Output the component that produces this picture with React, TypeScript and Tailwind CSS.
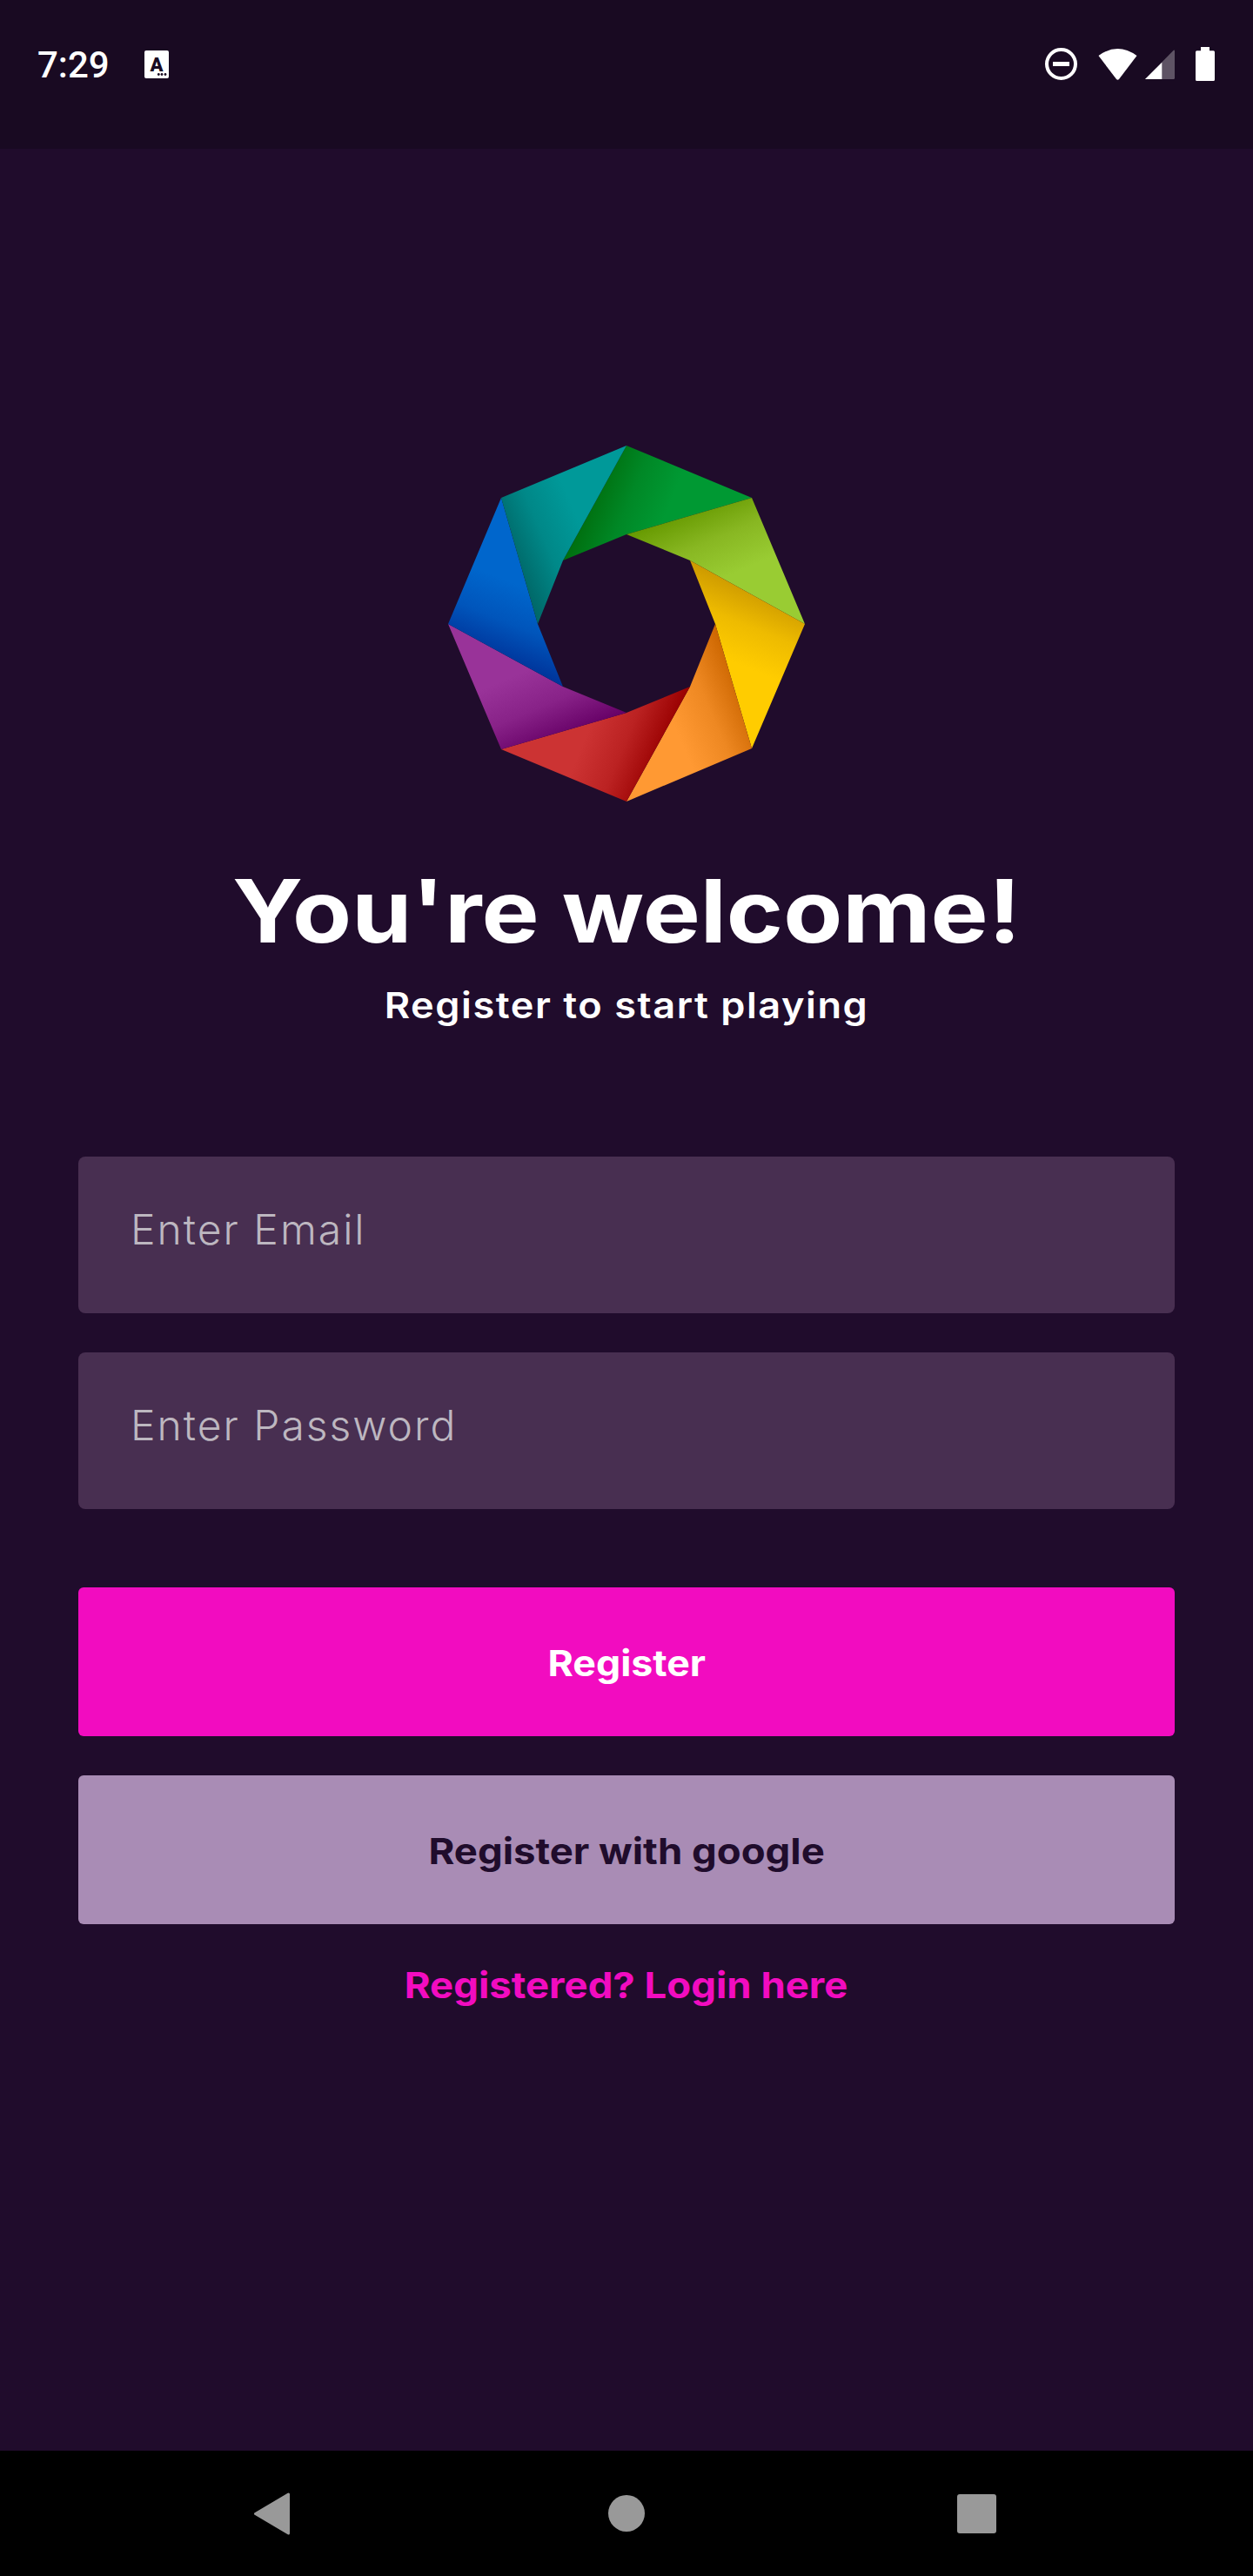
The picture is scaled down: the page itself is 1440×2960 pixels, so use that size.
const blades = [
  { id: 'green', pts: [[230, 22], [374, 82], [230, 124], [157, 154]], dark: '#006e0e', mid: '#008826', light: '#009933' },
  { id: 'lime', pts: [[374, 82], [435, 227], [303, 154], [230, 124]], dark: '#669900', mid: '#88b722', light: '#99cc33' },
  { id: 'yellow', pts: [[435, 227], [374, 370], [332, 227], [303, 154]], dark: '#cc9900', mid: '#eebb00', light: '#ffcc00' },
  { id: 'orange', pts: [[374, 370], [230, 431], [303, 299], [332, 227]], dark: '#cc6600', mid: '#ee8822', light: '#ff9933' },
  { id: 'red', pts: [[230, 431], [86, 371], [230, 329], [303, 299]], dark: '#990000', mid: '#bb2222', light: '#cc3333' },
  { id: 'purple', pts: [[86, 371], [25, 227], [157, 299], [230, 329]], dark: '#660066', mid: '#882288', light: '#993399' },
  { id: 'blue', pts: [[25, 227], [86, 82], [128, 227], [157, 299]], dark: '#003399', mid: '#0055bb', light: '#0066cc' },
  { id: 'teal', pts: [[86, 82], [230, 22], [157, 154], [128, 227]], dark: '#006666', mid: '#008888', light: '#009999' },
]

// gradient starts at the inner end of the fold and runs into the blade, tilted
// a little so the shade fades out toward the outer end of the fold
function foldGradient(pts: number[][]) {
  const [ox, oy] = pts[0]
  const [ix, iy] = pts[3]
  const [cx, cy] = pts[1]
  const l = Math.hypot(ox - ix, oy - iy)
  const ux = (ox - ix) / l
  const uy = (oy - iy) / l
  let nx = -uy
  let ny = ux
  if ((cx - ix) * nx + (cy - iy) * ny < 0) {
    nx = -nx
    ny = -ny
  }
  const dx = nx * 0.99 + ux * 0.12
  const dy = ny * 0.99 + uy * 0.12
  return { x1: ix, y1: iy, x2: ix + dx * 90, y2: iy + dy * 90 }
}

function Logo() {
  return (
    <svg width="460" height="460" viewBox="0 0 460 460" className="block">
      <defs>
        {blades.map((b) => (
          <linearGradient key={b.id} id={b.id} gradientUnits="userSpaceOnUse" {...foldGradient(b.pts)}>
            <stop offset="0" stopColor={b.dark} />
            <stop offset="0.5" stopColor={b.mid} />
            <stop offset="1" stopColor={b.light} />
          </linearGradient>
        ))}
      </defs>
      {blades.map((b) => (
        <polygon key={b.id} points={b.pts.map((p) => p.join(',')).join(' ')} fill={`url(#${b.id})`} />
      ))}
    </svg>
  )
}

function StatusBar() {
  return (
    <div className="flex h-[171px] items-center bg-[#190a22] pb-[24px] pl-[43px] pr-[44px]">
      <span className="pt-[3px] font-['Roboto',sans-serif] text-[42px] font-medium leading-none text-white">7:29</span>
      <svg width="28" height="32" viewBox="0 0 28 32" className="ml-[40px]">
        <rect width="28" height="32" rx="2" fill="#fff" />
        <text x="14" y="24" textAnchor="middle" fontFamily="Roboto, sans-serif" fontWeight="900" fontSize="22" fill="#190a22">A</text>
        <circle cx="16.3" cy="27.5" r="1.4" fill="#190a22" />
        <circle cx="20" cy="27.5" r="1.4" fill="#190a22" />
        <circle cx="24" cy="27.5" r="1.4" fill="#190a22" />
      </svg>
      <div className="ml-auto flex items-center">
        <svg width="37" height="37" viewBox="0 0 37 37">
          <circle cx="18.5" cy="18.5" r="16.5" fill="none" stroke="#fff" strokeWidth="4" />
          <rect x="9" y="16" width="19" height="5" fill="#fff" />
        </svg>
        <svg width="45" height="36" viewBox="0 0 45 36" className="ml-[24px]">
          <path d="M0.5 8 Q22.5 -8 44.5 8 L24 35 Q22.5 36.5 21 35 Z" fill="#fff" />
        </svg>
        <svg width="34" height="34" viewBox="0 0 34 34" className="ml-[9px]">
          <path d="M0 34 L33 0.5 Q34 0 34 2 V32.5 Q34 34 32.5 34 Z" fill="#fff" fillOpacity="0.3" />
          <path d="M0 34 L19.3 14.7 V34 Z" fill="#fff" />
        </svg>
        <svg width="22" height="39" viewBox="0 0 22 39" className="ml-[24px]">
          <path d="M6 0 H16 V4.3 H20.5 Q22 4.3 22 5.8 V37.5 Q22 39 20.5 39 H1.5 Q0 39 0 37.5 V5.8 Q0 4.3 1.5 4.3 H6 Z" fill="#fff" />
        </svg>
      </div>
    </div>
  )
}

function NavBar() {
  return (
    <div className="flex h-[144px] items-center bg-black pl-[292px]">
      <svg width="41" height="49" viewBox="0 0 41 49">
        <polygon points="39.5,2 39.5,47 1.5,24.5" fill="#999" stroke="#999" strokeWidth="3" strokeLinejoin="round" />
      </svg>
      <div className="ml-[366px] size-[42px] rounded-full bg-[#999]" />
      <div className="ml-[359px] size-[45px] rounded-[3px] bg-[#999]" />
    </div>
  )
}

export default function App() {
  return (
    <div className="flex h-[2960px] w-[1440px] flex-col bg-[#200c2c] font-['Inter',sans-serif]">
      <StatusBar />
      <main className="flex flex-1 flex-col items-center pt-[319px]">
        <Logo />
        <h1 className="mt-[37px] scale-x-[1.11] text-[100px] font-bold leading-[120px] text-white">You're welcome!</h1>
        <p className="mt-[18px] scale-x-[1.1] text-[41px] font-semibold leading-[60px] tracking-[1.4px] text-white">Register to start playing</p>

        <div className="mt-[144px] flex w-[1260px] flex-col gap-[45px]">
          <input
            placeholder="Enter Email"
            className="h-[180px] rounded-[8px] bg-[#482f51] pb-[14px] pl-[60px] text-[48px] font-light tracking-[2px] text-white outline-none placeholder:text-[#bdb7c0]"
          />
          <input
            placeholder="Enter Password"
            className="h-[180px] rounded-[8px] bg-[#482f51] pb-[14px] pl-[60px] text-[48px] font-light tracking-[2px] text-white outline-none placeholder:text-[#bdb7c0]"
          />
        </div>

        <div className="mt-[90px] flex w-[1260px] flex-col gap-[45px]">
          <button className="h-[171px] rounded-[6px] bg-[#f20cc0] pt-1 text-[41px] font-bold text-white">
            <span className="inline-block scale-x-[1.09]">Register</span>
          </button>
          <button className="h-[171px] rounded-[6px] bg-[#a98cb5] pt-1 text-[41px] font-bold text-[#200c2c]">
            <span className="inline-block scale-x-[1.11]">Register with google</span>
          </button>
        </div>

        <a className="mt-[40px] scale-x-[1.11] text-[41px] font-bold leading-[60px] text-[#f20cc0]">Registered? Login here</a>
      </main>
      <NavBar />
    </div>
  )
}
